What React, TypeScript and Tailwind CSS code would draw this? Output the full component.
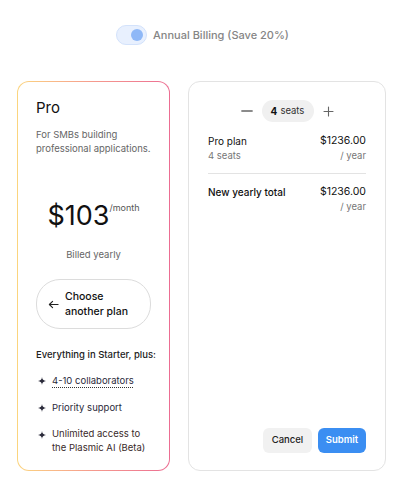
import React from "react";

const Sparkle = () => (
  <svg width="8" height="8" viewBox="0 0 10 10" className="shrink-0 mt-[4px]">
    <path d="M5 0 C5.4 3.3 6.7 4.6 10 5 C6.7 5.4 5.4 6.7 5 10 C4.6 6.7 3.3 5.4 0 5 C3.3 4.6 4.6 3.3 5 0 Z" fill="#2a2a3a" />
  </svg>
);

export default function App() {
  return (
    <div className="w-[414px] h-[500px] bg-white" style={{ fontFamily: "Inter, 'Noto Sans', sans-serif" }}>
      <div className="flex justify-center items-center pt-[25px] pr-[9px] gap-[6px]">
        <div className="w-[31px] h-[20px] rounded-full bg-[#e8f0fe] border border-[#d3e2fb] flex items-center justify-end pr-[3px]">
          <div className="w-[12px] h-[12px] rounded-full bg-[#8fb8f7]" />
        </div>
        <span className="text-[11px] font-medium text-[#858585] leading-[20px]">Annual Billing (Save 20%)</span>
      </div>

      <div className="flex pl-[17px] gap-[18px] mt-[36px]">
        <div className="w-[153px] h-[390px] rounded-[12px] p-px bg-gradient-to-r from-[#fbd57e] via-[#f59a8e] to-[#ec6d92]">
          <div className="w-full h-full bg-white rounded-[11px] px-[18px] pt-[14px] flex flex-col">
            <div className="text-[15px] leading-[24px] text-[#111]">Pro</div>
            <div className="mt-[8px] text-[9.5px] leading-[14px] text-[#666]">
              For SMBs building
              <br />
              professional applications.
            </div>
            <div className="mt-[42px] flex justify-center items-start">
              <span className="text-[27px] leading-[36px] text-[#111]">$103</span>
              <span className="text-[9px] leading-[12px] text-[#555] mt-[4px]">/month</span>
            </div>
            <div className="mt-[13px] text-center text-[9.5px] leading-[16px] text-[#666]">Billed yearly</div>
            <div className="mt-[16px] h-[50px] rounded-[24px] border border-[#dcdcdc] flex items-center pl-[11px] gap-[6px]">
              <svg width="11" height="11" viewBox="0 0 12 12" fill="none" stroke="#222" strokeWidth="1.2" strokeLinecap="round" strokeLinejoin="round">
                <path d="M11 6H1.5M5 2.5L1.5 6L5 9.5" />
              </svg>
              <span className="text-[10.5px] leading-[15px] font-medium text-[#111]">
                Choose
                <br />
                another plan
              </span>
            </div>
            <div className="mt-[18px] text-[9.5px] leading-[16px] font-medium text-[#222] whitespace-nowrap">Everything in Starter, plus:</div>
            <div className="mt-[10px] flex flex-col gap-[11px]">
              <div className="flex gap-[6px] items-start pl-[2px]">
                <Sparkle />
                <span className="text-[9.5px] leading-[16px] text-[#2a2a3a] underline decoration-dotted decoration-[#333] underline-offset-[3px]">4-10 collaborators</span>
              </div>
              <div className="flex gap-[6px] items-start pl-[2px]">
                <Sparkle />
                <span className="text-[9.5px] leading-[16px] text-[#2a2a3a]">Priority support</span>
              </div>
              <div className="flex gap-[6px] items-start pl-[2px]">
                <Sparkle />
                <span className="text-[9.5px] leading-[14px] text-[#3a2a2a]">
                  Unlimited access to
                  <br />
                  the Plasmic AI (Beta)
                </span>
              </div>
            </div>
          </div>
        </div>

        <div className="w-[198px] h-[390px] rounded-[12px] border border-[#e3e3e3] px-[19px] pt-[18px] pb-[17px] flex flex-col">
          <div className="flex justify-center items-center">
            <svg width="12" height="12" viewBox="0 0 12 12" stroke="#666" strokeWidth="1.3" strokeLinecap="round">
              <path d="M0.8 6H11.2" />
            </svg>
            <div className="ml-[9px] mr-[9px] h-[22px] w-[52px] rounded-full bg-[#f0f0f0] flex items-center justify-center gap-[3px]">
              <span className="text-[10px] font-bold text-[#111]">4</span>
              <span className="text-[9.5px] text-[#333]">seats</span>
            </div>
            <svg width="11" height="11" viewBox="0 0 11 11" stroke="#666" strokeWidth="1.1" strokeLinecap="round">
              <path d="M1 5.5H10M5.5 1V10" />
            </svg>
          </div>
          <div className="mt-[11px] flex justify-between">
            <div className="flex flex-col">
              <span className="text-[10px] leading-[16px] text-[#111]">Pro plan</span>
              <span className="text-[9.5px] leading-[14px] text-[#777]">4 seats</span>
            </div>
            <div className="flex flex-col items-end">
              <span className="text-[10.5px] leading-[16px] text-[#111]">$1236.00</span>
              <span className="text-[9.5px] leading-[14px] text-[#777]">/ year</span>
            </div>
          </div>
          <div className="mt-[10px] h-px bg-[#e3e3e3]" />
          <div className="mt-[10px] flex justify-between">
            <span className="text-[10px] leading-[16px] text-[#111] font-medium">New yearly total</span>
            <div className="flex flex-col items-end">
              <span className="text-[10.5px] leading-[16px] text-[#111]">$1236.00</span>
              <span className="text-[9.5px] leading-[14px] text-[#777]">/ year</span>
            </div>
          </div>
          <div className="mt-auto flex justify-end gap-[6px] pr-[0px]">
            <button className="h-[25px] w-[49px] rounded-[6px] bg-[#f1f1f1] text-[9.5px] font-medium text-[#222]">Cancel</button>
            <button className="h-[25px] w-[48px] rounded-[6px] bg-[#3b8ef2] text-[9.5px] font-semibold text-white">Submit</button>
          </div>
        </div>
      </div>
    </div>
  );
}
